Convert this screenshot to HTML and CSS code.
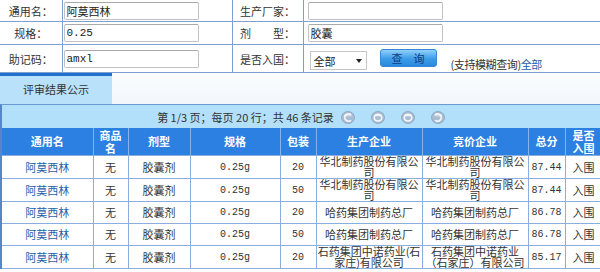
FILE: index.html
```html
<!DOCTYPE html>
<html lang="zh-CN">
<head>
    <meta charset="UTF-8">
    <title>评审结果公示</title>
    <link rel="stylesheet" href="styles.css">
</head>
<body>
    <table class="search">
        <colgroup>
            <col class="c-label">
            <col class="c-field">
            <col class="c-label2">
            <col>
        </colgroup>
        <tr class="row1">
            <td class="label">通用名：</td>
            <td class="field"><input type="text" value="阿莫西林"></td>
            <td class="label">生产厂家：</td>
            <td class="field wide"><input type="text" value=""></td>
        </tr>
        <tr class="row2">
            <td class="label">规格：</td>
            <td class="field"><input type="text" value="0.25"></td>
            <td class="label">剂　　型：</td>
            <td class="field wide"><input type="text" value="胶囊"></td>
        </tr>
        <tr class="row3">
            <td class="label">助记码：</td>
            <td class="field"><input type="text" value="amxl"></td>
            <td class="label">是否入国：</td>
            <td class="field wide">
                <div class="actions">
                    <span class="select-wrap">
                        <select>
                            <option>全部</option>
                            <option>入围</option>
                            <option>未入围</option>
                        </select>
                    </span>
                    <button class="query">查　询</button>
                    <span class="hint">(支持模糊查询)<a href="#">全部</a></span>
                </div>
            </td>
        </tr>
    </table>

    <div class="tabs">
        <span class="tab">评审结果公示</span>
    </div>

    <div class="result">
        <div class="pager">
            <span>第 1/3 页；每页 20 行；共 46 条记录</span>
            <span class="pager-btns">
                <svg class="pbtn" width="14" height="13" viewBox="0 0 14 13"><ellipse cx="7" cy="6.5" rx="6.5" ry="6" class="pb-bg"/><path d="M10 3.6 A4 3.6 0 1 0 10 9.4" class="pb-ring"/><ellipse cx="7" cy="4" rx="4" ry="1.6" class="pb-shine"/></svg>
                <svg class="pbtn" width="14" height="13" viewBox="0 0 14 13"><ellipse cx="7" cy="6.5" rx="6.5" ry="6" class="pb-bg"/><ellipse cx="7" cy="6.8" rx="3.8" ry="3.2" class="pb-ring"/><ellipse cx="7" cy="4" rx="4" ry="1.6" class="pb-shine"/></svg>
                <svg class="pbtn" width="14" height="13" viewBox="0 0 14 13"><ellipse cx="7" cy="6.5" rx="6.5" ry="6" class="pb-bg"/><ellipse cx="7" cy="6.8" rx="3.8" ry="3.2" class="pb-ring"/><ellipse cx="7" cy="4" rx="4" ry="1.6" class="pb-shine"/></svg>
                <svg class="pbtn" width="14" height="13" viewBox="0 0 14 13"><ellipse cx="7" cy="6.5" rx="6.5" ry="6" class="pb-bg"/><path d="M4 3.6 A4 3.6 0 1 1 4 9.4" class="pb-ring"/><ellipse cx="7" cy="4" rx="4" ry="1.6" class="pb-shine"/></svg>
            </span>
        </div>

        <table class="grid">
            <colgroup>
                <col style="width:91px">
                <col style="width:35px">
                <col style="width:62px">
                <col style="width:90px">
                <col style="width:36px">
                <col style="width:106px">
                <col style="width:106px">
                <col style="width:37px">
                <col style="width:37px">
            </colgroup>
            <thead>
                <tr>
                    <th>通用名</th>
                    <th>商品<br>名</th>
                    <th>剂型</th>
                    <th>规格</th>
                    <th>包装</th>
                    <th>生产企业</th>
                    <th>竞价企业</th>
                    <th>总分</th>
                    <th>是否<br>入围</th>
                </tr>
            </thead>
            <tbody>
                <tr>
                    <td><a href="#">阿莫西林</a></td>
                    <td>无</td>
                    <td>胶囊剂</td>
                    <td class="num">0.25g</td>
                    <td class="num">20</td>
                    <td>华北制药股份有限公司</td>
                    <td>华北制药股份有限公司</td>
                    <td class="num">87.44</td>
                    <td>入围</td>
                </tr>
                <tr>
                    <td><a href="#">阿莫西林</a></td>
                    <td>无</td>
                    <td>胶囊剂</td>
                    <td class="num">0.25g</td>
                    <td class="num">50</td>
                    <td>华北制药股份有限公司</td>
                    <td>华北制药股份有限公司</td>
                    <td class="num">87.44</td>
                    <td>入围</td>
                </tr>
                <tr>
                    <td><a href="#">阿莫西林</a></td>
                    <td>无</td>
                    <td>胶囊剂</td>
                    <td class="num">0.25g</td>
                    <td class="num">20</td>
                    <td>哈药集团制药总厂</td>
                    <td>哈药集团制药总厂</td>
                    <td class="num">86.78</td>
                    <td>入围</td>
                </tr>
                <tr>
                    <td><a href="#">阿莫西林</a></td>
                    <td>无</td>
                    <td>胶囊剂</td>
                    <td class="num">0.25g</td>
                    <td class="num">50</td>
                    <td>哈药集团制药总厂</td>
                    <td>哈药集团制药总厂</td>
                    <td class="num">86.78</td>
                    <td>入围</td>
                </tr>
                <tr>
                    <td><a href="#">阿莫西林</a></td>
                    <td>无</td>
                    <td>胶囊剂</td>
                    <td class="num">0.25g</td>
                    <td class="num">20</td>
                    <td>石药集团中诺药业(石家庄)有限公司</td>
                    <td>石药集团中诺药业（石家庄）有限公司</td>
                    <td class="num">85.17</td>
                    <td>入围</td>
                </tr>
            </tbody>
        </table>
    </div>
</body>
</html>
```

FILE: styles.css
```css
body {
    margin: 0;
    font-family: "Noto Sans CJK SC", sans-serif;
    font-size: 11px;
    color: #333;
    background: #fff;
    overflow: hidden;
}

a {
    color: #1f5fa8;
    text-decoration: none;
}

/* search form */

.search {
    width: 600px;
    border-collapse: collapse;
    table-layout: fixed;
}

.search .c-label {
    width: 62px;
}

.search .c-field {
    width: 170px;
}

.search .c-label2 {
    width: 71px;
}

.search td {
    border-bottom: 1px solid #7f9fd2;
    border-right: 1px solid #7f9fd2;
    padding: 0;
}

.search td.wide {
    border-right: none;
}

.search .label {
    text-align: center;
    white-space: nowrap;
}

.search .row1 td {
    height: 21px;
}

.search .row2 td {
    height: 22px;
}

.search .row3 td {
    height: 27px;
}

.search .field {
    padding-left: 1px;
}

.search .wide {
    padding-left: 4px;
}

.search input {
    display: block;
    width: 135px;
    height: 18px;
    box-sizing: border-box;
    border: 1px solid #c2c2c2;
    border-top-color: #a9a9a9;
    border-radius: 2px;
    padding: 0 2px;
    font-family: "Liberation Mono", "Noto Sans CJK SC", monospace;
    font-size: 11px;
    color: #222;
}

.actions {
    display: flex;
    align-items: center;
    white-space: nowrap;
    height: 27px;
}

.select-wrap {
    position: relative;
    margin-left: 2px;
    margin-top: 4px;
    height: 19px;
}

.select-wrap select {
    display: block;
    appearance: none;
    width: 57px;
    height: 19px;
    border: 1px solid #c6c6c6;
    border-radius: 0;
    background: #fff;
    padding: 0 0 0 3px;
    font-family: "Noto Sans CJK SC", sans-serif;
    font-size: 11px;
    color: #222;
}

.select-wrap::after {
    content: "";
    position: absolute;
    right: 5px;
    top: 8px;
    border-left: 3px solid transparent;
    border-right: 3px solid transparent;
    border-top: 4px solid #222;
}

.query {
    margin-left: 13px;
    margin-top: -2px;
    width: 57px;
    height: 18px;
    border: 1px solid #3b86d4;
    border-radius: 3px;
    background: linear-gradient(#8fd0fa, #3c9ce8 55%, #2a89de);
    font-family: "Noto Sans CJK SC", sans-serif;
    font-size: 11px;
    line-height: 14px;
    color: #0e3c86;
    padding: 0;
}

.hint {
    margin-left: 14px;
    margin-top: 10px;
    letter-spacing: -0.4px;
}

/* tabs */

.tabs {
    display: flex;
    height: 31px;
    background: linear-gradient(#fbfdff, #f2f7fc);
}

.tab {
    width: 112px;
    border-top: 3px solid #1f6fcf;
    background: #b9e1f9;
    text-align: center;
    line-height: 26px;
}

/* results */

.result {
    border-top: 1px solid #6b9ad4;
    border-left: 2px solid #5586c8;
}

.pager {
    height: 22px;
    background: #b2dff9;
    display: flex;
    align-items: center;
    justify-content: center;
    padding-top: 1px;
}

.pager-btns {
    display: flex;
    gap: 16px;
    margin-left: 7px;
}

.pbtn .pb-bg {
    fill: #a9bdd3;
    stroke: #8aa2bd;
    stroke-width: 0.8;
}

.pbtn .pb-ring {
    fill: none;
    stroke: #f4f8fc;
    stroke-width: 1.6;
}

.pbtn .pb-shine {
    fill: #ffffff;
    opacity: 0.45;
}

.grid {
    width: 600px;
    border-collapse: collapse;
    table-layout: fixed;
}

.grid th {
    height: 27px;
    background: #2c80e2;
    color: #fff;
    font-weight: bold;
    font-size: 11px;
    line-height: 13px;
    border-right: 1px solid #86b4ec;
    padding: 0;
}

.grid td {
    height: 21px;
    padding: 0;
    border: 1px solid #8caede;
    border-left: none;
    text-align: center;
    line-height: 11px;
    background: #fff;
}

.grid td.num {
    font-family: "Liberation Mono", monospace;
    font-size: 10px;
}
```
